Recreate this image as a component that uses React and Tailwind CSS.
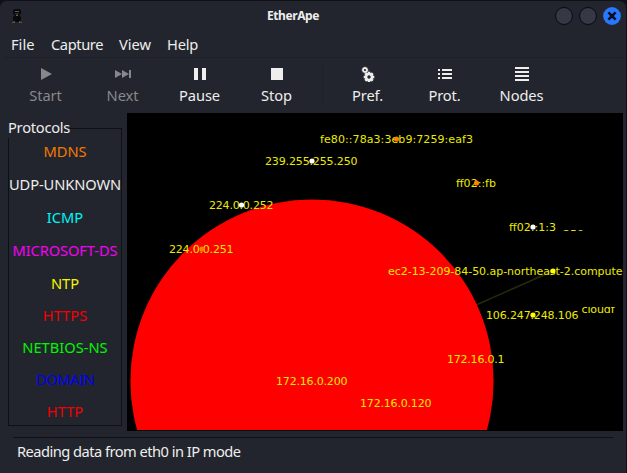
import React from 'react';

const menus = [
  ['File', 'w-[40px]'],
  ['Capture', 'w-[68px] tracking-[-0.4px]'],
  ['View', 'w-[48px]'],
  ['Help', 'w-[48px] tracking-[-0.2px]'],
];

const protocols = [
  ['MDNS', 'text-[#f57900] h-[33px]'],
  ['UDP-UNKNOWN', 'text-[#eeeeec] h-[33px] tracking-[-0.1px]'],
  ['ICMP', 'text-[#00f5f5] h-[33px]'],
  ['MICROSOFT-DS', 'text-[#f500f5] h-[33px] tracking-[-0.1px]'],
  ['NTP', 'text-[#f5f500] h-[32px]'],
  ['HTTPS', 'text-[#f50000] h-[32px]'],
  ['NETBIOS-NS', 'text-[#00f500] h-[32px]'],
  ['DOMAIN', 'text-[#0000f5] h-[32px] tracking-[-0.4px]'],
  ['HTTP', 'text-[#f50000] h-[32px]'],
];

const nodes = [
  { label: 'fe80::78a3:3eb9:7259:eaf3', x: 320, y: 143, w: 153, dot: '#ff7f00', cx: 396.5, cy: 139 },
  { label: '239.255.255.250', x: 265, y: 165, w: 92.5, dot: '#ffffff', cx: 312, cy: 161 },
  { label: 'ff02::fb', x: 456, y: 187, w: 40, dot: '#ff7f00', cx: 476.5, cy: 183 },
  { label: '224.0.0.252', x: 209, y: 209, w: 64.5, dot: '#ffffff', cx: 241.5, cy: 205 },
  { label: 'ff02::1:3', x: 509, y: 231, w: 47, dot: '#ffffff', cx: 533, cy: 227 },
  { label: '224.0.0.251', x: 169, y: 253, w: 64.5, dot: '#ff7f00', cx: 202, cy: 249 },
  { label: 'ec2-13-209-84-50.ap-northeast-2.compute', x: 388, y: 275, w: 234.5, dot: '#ffff00', cx: 553, cy: 271 },
  { label: '106.247.248.106', x: 486, y: 319, w: 92.5, dot: '#ffff00', cx: 533, cy: 315 },
  { label: '172.16.0.1', x: 447, y: 363, w: 57.5 },
  { label: '172.16.0.200', x: 276, y: 385, w: 71.5 },
  { label: '172.16.0.120', x: 360, y: 407, w: 71.5 },
];

const Icon = ({ children }) => (
  <svg width="18" height="16" viewBox="0 0 18 16" fill="currentColor" shapeRendering="crispEdges">{children}</svg>
);

function Gear({ x, y, r, teeth, hole }) {
  return (
    <g transform={`translate(${x} ${y})`} shapeRendering="geometricPrecision">
      {Array.from({ length: teeth }, (_, i) => (
        <rect key={i} x={-r * 0.24} y={-r} width={r * 0.48} height={r} transform={`rotate(${(i * 360) / teeth})`} />
      ))}
      <circle r={(r * 0.78 + hole) / 2} fill="none" stroke="currentColor" strokeWidth={r * 0.78 - hole} />
      <circle r={hole} fill="#23252e" />
    </g>
  );
}

function Tool({ label, dim, children }) {
  return (
    <div className={`flex w-[77px] flex-col items-center ${dim ? 'text-[#87888b]' : 'text-[#eeeeec]'}`}>
      <Icon>{children}</Icon>
      <span className="mt-[3px] h-[20px] leading-[20px] tracking-[-0.1px]">{label}</span>
    </div>
  );
}

function Close() {
  return (
    <svg width="18" height="18" viewBox="0 0 18 18">
      <circle cx="9" cy="9" r="8.9" fill="#2777ff" />
      <path d="M5.4 5.4L12.6 12.6M12.6 5.4L5.4 12.6" stroke="#07101f" strokeWidth="2.6" />
    </svg>
  );
}

function Ape() {
  return (
    <svg width="12" height="17" viewBox="0 0 12 17">
      <path d="M3 1h6l1 2v3L8 7l2 2v3l-1 1H3l-1-1V9l2-2-2-1V3z" fill="#08090b" />
      <path d="M4 3h4v1H4z" fill="#55575c" />
      <path d="M4 5h4v1H4zM5 6h2v1H5z" fill="#332b29" />
      <path d="M5 7h2v1H5z" fill="#7a5b4b" />
      <path d="M3 13h6v1H3z" fill="#08090b" />
      <path d="M1 14h3v1H1zM8 14h3v1H8zM3 13h1v1H3zM8 13h1v1H8z" fill="#67504a" />
    </svg>
  );
}

export default function App() {
  return (
    <div className="h-[473px] w-[627px] overflow-hidden bg-[#101117] font-['Noto_Sans',sans-serif] text-[14.67px] text-[#eeeeec]">
      <div className="flex h-[473px] w-[626px] flex-col rounded-t-[7px] border-t border-[#101117] bg-[#23252e]">
        <header className="flex h-[31px] items-center pl-[11px] pr-[5px]">
          <Ape />
          <h1 className="ml-[8px] flex-1 pb-[2px] text-center text-[12px] font-bold tracking-[-0.4px]">EtherApe</h1>
          <div className="flex items-center gap-[6px] pb-px">
            <span className="size-[18px] rounded-full border border-[#08090d] bg-[#353945]" />
            <span className="size-[18px] rounded-full border border-[#08090d] bg-[#353945]" />
            <Close />
          </div>
        </header>
        <nav className="mx-[3px] flex h-[26px] border-b border-[#1e2028] pl-[8px] leading-[24px]">
          {menus.map(([m, w]) => <span key={m} className={`${w} whitespace-nowrap`}>{m}</span>)}
        </nav>
        <div className="flex h-[55px] pl-[7px] pt-[8px]">
          <Tool label="Start" dim><path d="M4 2L15 8L4 14Z" shapeRendering="geometricPrecision" /></Tool>
          <Tool label="Next" dim>
            <path d="M1 4L8 8L1 12ZM8 4L15 8L8 12Z" shapeRendering="geometricPrecision" /><path d="M15 4h2v8h-2z" />
          </Tool>
          <Tool label="Pause"><path d="M3 2h4v12H3zM11 2h4v12h-4z" /></Tool>
          <Tool label="Stop"><path d="M3 2h12v12H3z" /></Tool>
          <div className="-mt-[2px] ml-[7px] mr-[6px] h-[44px] w-px bg-[#1f2129]" />
          <Tool label="Pref."><Gear x={6} y={4} r={3.2} teeth={8} hole={1.1} /><Gear x={10} y={11} r={5.3} teeth={8} hole={1.7} /></Tool>
          <Tool label="Prot."><path d="M2 3h2v2H2zM6 3h10v2H6zM2 7h2v2H2zM6 7h10v2H6zM2 11h2v2H2zM6 11h10v2H6z" /></Tool>
          <Tool label="Nodes"><path d="M2 1h14v2H2zM2 5h14v2H2zM2 9h14v2H2zM2 13h14v2H2z" /></Tool>
        </div>
        <main className="flex h-[318px]">
          <fieldset className="ml-[8px] mt-[5px] h-[308px] w-[114px] min-w-0 border border-[#0f1016] pt-px">
            <legend className="-ml-px h-[20px] whitespace-nowrap leading-[18px] tracking-[-0.25px]">Protocols</legend>
            <ul className="flex flex-col items-center whitespace-nowrap">
              {protocols.map(([p, c]) => <li key={p} className={`${c} leading-[24px]`}>{p}</li>)}
            </ul>
          </fieldset>
          <svg className="ml-[5px] bg-black" width="496" height="318" viewBox="127 113 496 318" fontFamily="'DejaVu Sans', sans-serif" fontSize="11">
            <defs>
              <clipPath id="area"><rect x="127" y="113" width="496" height="317" /></clipPath>
            </defs>
            <g clipPath="url(#area)">
              <path d="M553 271L476 305" stroke="#292908" strokeWidth="1.5" />
              <circle cx="312" cy="381" r="181.6" fill="red" />
            </g>
            <g fill="#ebeb00">
              <text x="563" y="237.5" textLength="21">250</text>
              <text x="581.5" y="313" textLength="33">cloudf</text>
              <path d="M560 231h30v8h-30zM558 226h30v3h-30zM579 303h40v4h-40z" fill="black" />
              {nodes.map((n) => <text key={n.label} x={n.x} y={n.y} textLength={n.w}>{n.label}</text>)}
            </g>
            {nodes.filter((n) => n.dot).map((n) => <circle key={n.label} cx={n.cx} cy={n.cy} r="2.6" fill={n.dot} />)}
          </svg>
        </main>
        <footer className="ml-[13px] mr-[13px] mt-[6px] border-t border-[#0f1016] pl-[4px] leading-[26px] tracking-[-0.53px]">Reading data from eth0 in IP mode</footer>
      </div>
    </div>
  );
}
